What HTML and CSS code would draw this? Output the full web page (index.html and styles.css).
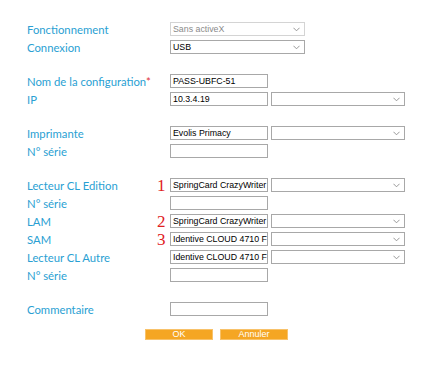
FILE: index.html
```html
<!DOCTYPE html>
<html lang="fr">
<head>
    <meta charset="UTF-8">
    <title>Configuration</title>
    <link rel="stylesheet" href="styles.css">
</head>
<body>
    <form class="config-form">
        <div class="group">
            <div class="row">
                <label class="label">Fonctionnement</label>
                <span class="mark"></span>
                <div class="select select-wide disabled"><span>Sans activeX</span><svg class="chevron" viewBox="0 0 8 5"><path d="M0.5 0.5 L4 4 L7.5 0.5"/></svg></div>
            </div>
            <div class="row">
                <label class="label">Connexion</label>
                <span class="mark"></span>
                <div class="select select-wide"><span>USB</span><svg class="chevron" viewBox="0 0 8 5"><path d="M0.5 0.5 L4 4 L7.5 0.5"/></svg></div>
            </div>
        </div>

        <div class="group">
            <div class="row">
                <label class="label">Nom de la configuration<span class="required">*</span></label>
                <span class="mark"></span>
                <div class="input">PASS-UBFC-51</div>
            </div>
            <div class="row">
                <label class="label">IP</label>
                <span class="mark"></span>
                <div class="input">10.3.4.19</div>
                <div class="select"><span></span><svg class="chevron" viewBox="0 0 8 5"><path d="M0.5 0.5 L4 4 L7.5 0.5"/></svg></div>
            </div>
        </div>

        <div class="group">
            <div class="row">
                <label class="label">Imprimante</label>
                <span class="mark"></span>
                <div class="input">Evolis Primacy</div>
                <div class="select"><span></span><svg class="chevron" viewBox="0 0 8 5"><path d="M0.5 0.5 L4 4 L7.5 0.5"/></svg></div>
            </div>
            <div class="row">
                <label class="label">N° série</label>
                <span class="mark"></span>
                <div class="input"></div>
            </div>
        </div>

        <div class="group">
            <div class="row">
                <label class="label">Lecteur CL Edition</label>
                <span class="mark">1</span>
                <div class="input">SpringCard CrazyWriter</div>
                <div class="select"><span></span><svg class="chevron" viewBox="0 0 8 5"><path d="M0.5 0.5 L4 4 L7.5 0.5"/></svg></div>
            </div>
            <div class="row">
                <label class="label">N° série</label>
                <span class="mark"></span>
                <div class="input"></div>
            </div>
            <div class="row">
                <label class="label">LAM</label>
                <span class="mark">2</span>
                <div class="input">SpringCard CrazyWriter</div>
                <div class="select"><span></span><svg class="chevron" viewBox="0 0 8 5"><path d="M0.5 0.5 L4 4 L7.5 0.5"/></svg></div>
            </div>
            <div class="row">
                <label class="label">SAM</label>
                <span class="mark">3</span>
                <div class="input">Identive CLOUD 4710 F SAM</div>
                <div class="select"><span></span><svg class="chevron" viewBox="0 0 8 5"><path d="M0.5 0.5 L4 4 L7.5 0.5"/></svg></div>
            </div>
            <div class="row">
                <label class="label">Lecteur CL Autre</label>
                <span class="mark"></span>
                <div class="input">Identive CLOUD 4710 F Contactless</div>
                <div class="select"><span></span><svg class="chevron" viewBox="0 0 8 5"><path d="M0.5 0.5 L4 4 L7.5 0.5"/></svg></div>
            </div>
            <div class="row">
                <label class="label">N° série</label>
                <span class="mark"></span>
                <div class="input"></div>
            </div>
        </div>

        <div class="group">
            <div class="row">
                <label class="label">Commentaire</label>
                <span class="mark"></span>
                <div class="input"></div>
            </div>
        </div>

        <div class="actions">
            <button type="button" class="btn">OK</button>
            <button type="button" class="btn">Annuler</button>
        </div>
    </form>
</body>
</html>
```

FILE: styles.css
```css
body {
    margin: 0;
    padding: 22px 0 0 27px;
    background: #ffffff;
    font-family: 'Lato', sans-serif;
}
.config-form {
    display: flex;
    flex-direction: column;
    gap: 20px;
}
.group {
    display: flex;
    flex-direction: column;
    gap: 4px;
}
.row {
    display: flex;
    align-items: center;
    height: 14px;
}
.label {
    width: 130px;
    font-size: 11.3px;
    color: #2a9fd3;
    white-space: nowrap;
}
.required {
    color: #e0303a;
}
.mark {
    width: 13px;
    font-family: 'Liberation Serif', serif;
    font-size: 17px;
    color: #e0201e;
    line-height: 14px;
    padding-top: 2px;
}
.input,
.select {
    box-sizing: border-box;
    height: 14px;
    border: 1px solid #a8a8a8;
    font-family: 'Liberation Sans', Arial, sans-serif;
    font-size: 8.8px;
    line-height: 12px;
    color: #000000;
    background: #ffffff;
    padding: 0 2px;
    white-space: nowrap;
    overflow: hidden;
}
.input {
    width: 98px;
}
.select {
    width: 134px;
    margin-left: 3px;
    display: flex;
    align-items: center;
    justify-content: space-between;
    padding-right: 4px;
}
.select-wide {
    width: 135px;
    margin-left: 0;
}
.select.disabled {
    border-color: #d4d4d4;
    color: #8a8a8a;
}
.chevron {
    width: 7px;
    height: 5px;
    fill: none;
    stroke: #8a8a8a;
    stroke-width: 1;
}
.actions {
    display: flex;
    gap: 7px;
    padding-left: 118px;
    margin-top: -7px;
}
.btn {
    box-sizing: border-box;
    width: 68px;
    height: 11px;
    padding: 0;
    border: 1px solid #f8c26a;
    background: #f5a623;
    color: #ffffff;
    font-family: 'Liberation Sans', Arial, sans-serif;
    font-size: 9px;
    line-height: 9px;
    cursor: pointer;
}
```
